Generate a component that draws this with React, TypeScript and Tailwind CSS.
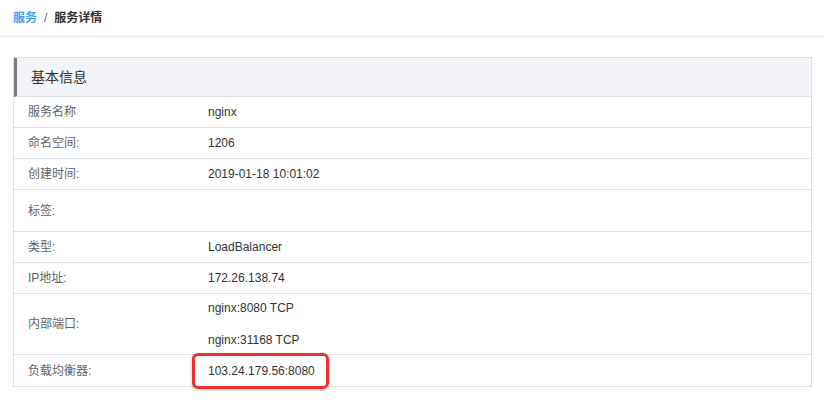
import React from 'react';

type Row = {
  label: string;
  values: string[];
  height: string;
  highlight?: boolean;
};

const rows: Row[] = [
  { label: '服务名称', values: ['nginx'], height: 'h-[31px]' },
  { label: '命名空间:', values: ['1206'], height: 'h-[31px]' },
  { label: '创建时间:', values: ['2019-01-18 10:01:02'], height: 'h-[31px]' },
  { label: '标签:', values: [], height: 'h-[42px]' },
  { label: '类型:', values: ['LoadBalancer'], height: 'h-[31px]' },
  { label: 'IP地址:', values: ['172.26.138.74'], height: 'h-[31px]' },
  { label: '内部端口:', values: ['nginx:8080 TCP', 'nginx:31168 TCP'], height: 'h-[61px]' },
  { label: '负载均衡器:', values: ['103.24.179.56:8080'], height: 'h-[31px]', highlight: true },
];

const App: React.FC = () => {
  return (
    <div
      className="w-[824px] h-[400px] bg-white overflow-hidden"
      style={{ fontFamily: '"Liberation Sans", "Noto Sans CJK SC", sans-serif' }}
    >
      <div className="h-[37px] border-b border-[#e4e7ed] flex items-center px-[13px] text-[12px] font-bold">
        <span className="text-[#409eff]">服务</span>
        <span className="mx-[7px] text-[#606266] font-normal">/</span>
        <span className="text-[#303133]">服务详情</span>
      </div>

      <div className="mx-[13px] mt-[20px] w-[799px] border border-[#dcdfe6]">
        <div className="h-[39px] bg-[#f3f4f8] border-l-[3px] border-[#7b7c88] border-b border-b-[#dcdfe6] flex items-center pl-[14px] text-[14px] text-[#303133]">
          基本信息
        </div>
        {rows.map((row, i) => (
          <div
            key={row.label}
            className={`${row.height} flex items-center text-[12px] ${i < rows.length - 1 ? 'border-b border-[#dcdfe6]' : ''}`}
          >
            <div className="w-[194px] pl-[14px] text-[#606266]">{row.label}</div>
            <div className="flex flex-col gap-[14px] text-[#333333]">
              {row.values.map(v =>
                row.highlight ? (
                  <span key={v} className="relative">
                    {v}
                    <span className="absolute -left-[16px] -right-[14px] -top-[9px] -bottom-[9px] border-[3px] border-[#f0302a] rounded-[6px] shadow-[0_1px_3px_rgba(0,0,0,0.25)]" />
                  </span>
                ) : (
                  <span key={v}>{v}</span>
                )
              )}
            </div>
          </div>
        ))}
      </div>
    </div>
  );
};

export default App;
